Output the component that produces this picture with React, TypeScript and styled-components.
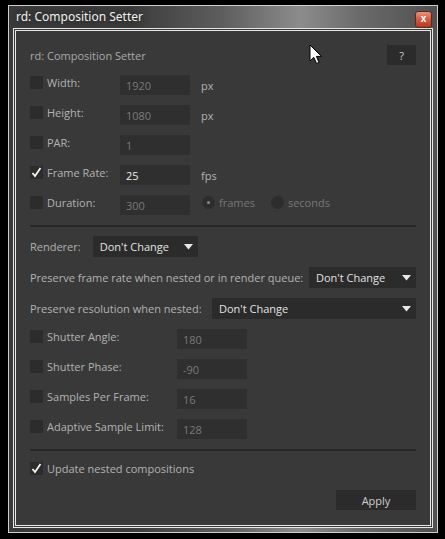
import React from "react";
import styled, { createGlobalStyle } from "styled-components";

const GlobalStyle = createGlobalStyle`
  html, body {
    margin: 0;
    padding: 0;
    background: #000;
  }
  #root {
    width: 445px;
    height: 539px;
    overflow: hidden;
  }
`;

const font = `"Open Sans", "Noto Sans", "Liberation Sans", sans-serif`;

const Window = styled.div`
  margin: 5px 0 0 8px;
  width: 430px;
  height: 528px;
  box-sizing: border-box;
  border: 1px solid #cfcfcf;
  background: linear-gradient(
    90deg,
    #3a3a3a 0%,
    #3b3b3b 28%,
    #5e5e5e 50%,
    #8c8c8c 68%,
    #6a6a6a 82%,
    #505050 100%
  );
  display: flex;
  flex-direction: column;
  padding: 0 4px 4px 4px;
  position: relative;
`;

const TitleBar = styled.div`
  height: 22px;
  display: flex;
  align-items: center;
  justify-content: space-between;
  padding: 0 1px 0 3px;
`;

const TitleText = styled.span`
  font-family: "Noto Sans", "Liberation Sans", sans-serif;
  font-size: 12px;
  color: #f0f0f0;
  margin-top: -1px;
  text-shadow: 0 0 6px rgba(0, 0, 0, 0.6);
`;

const CloseButton = styled.div`
  width: 15px;
  height: 15px;
  margin-top: 4px;
  border-radius: 3px;
  border: 1px solid #5a2a22;
  background: linear-gradient(180deg, #e9917c 0%, #cf5a41 50%, #b33a24 100%);
  display: flex;
  align-items: center;
  justify-content: center;
  font-family: "Liberation Sans", sans-serif;
  font-weight: bold;
  font-size: 10px;
  line-height: 1;
  color: #fff;
`;

const Frame = styled.div`
  flex: 1;
  border: 3px double #e8e8e8;
  background: #393939;
  display: flex;
  flex-direction: column;
  padding: 14px 14px 0 14px;
  font-family: ${font};
  font-size: 11px;
  color: #b3b3b3;
`;

const Header = styled.div`
  height: 20px;
  display: flex;
  align-items: center;
  justify-content: space-between;
  margin-bottom: 10px;
`;

const HeaderText = styled.span`
  color: #a9a9a9;
  font-size: 11px;
`;

const SmallButton = styled.div<{ $w: number }>`
  width: ${(p) => p.$w}px;
  height: 20px;
  background: #2b2b2b;
  color: #cfcfcf;
  display: flex;
  align-items: center;
  justify-content: center;
  font-size: 11px;
`;

const Rows = styled.div`
  display: flex;
  flex-direction: column;
  gap: 10px;
`;

const Row = styled.div<{ $h?: number }>`
  height: ${(p) => p.$h ?? 20}px;
  display: flex;
  align-items: center;
`;

const CheckLabel = styled.div<{ $w: number }>`
  width: ${(p) => p.$w}px;
  align-self: flex-start;
  height: 14px;
  display: flex;
  align-items: center;
  gap: 4px;
`;

const Box = styled.div`
  width: 13px;
  height: 13px;
  background: #2c2c2c;
  display: flex;
  align-items: center;
  justify-content: center;
  flex-shrink: 0;
`;

const Label = styled.span`
  color: #b3b3b3;
  white-space: nowrap;
`;

const Input = styled.div<{ $on?: boolean }>`
  width: 70px;
  height: 20px;
  box-sizing: border-box;
  background: #2f2f2f;
  padding-left: 6px;
  display: flex;
  align-items: center;
  color: ${(p) => (p.$on ? "#f0f0f0" : "#7a7a7a")};
`;

const Unit = styled.span`
  margin-left: 11px;
  color: #b3b3b3;
`;

const RadioGroup = styled.div`
  margin-left: 12px;
  align-self: flex-start;
  height: 14px;
  display: flex;
  align-items: center;
  gap: 4px;
`;

const Radio = styled.div<{ $on?: boolean }>`
  width: 13px;
  height: 13px;
  border-radius: 50%;
  background: #2d2d2d;
  display: flex;
  align-items: center;
  justify-content: center;
  &::after {
    content: "";
    display: ${(p) => (p.$on ? "block" : "none")};
    width: 3px;
    height: 3px;
    border-radius: 50%;
    background: #8a8a8a;
  }
`;

const RadioLabel = styled.span`
  color: #777;
  margin-right: 12px;
`;

const Separator = styled.div<{ $t: number; $b: number }>`
  height: 2px;
  background: #262626;
  margin: ${(p) => p.$t}px 0 ${(p) => p.$b}px 0;
`;

const Select = styled.div<{ $w: number }>`
  width: ${(p) => p.$w}px;
  height: 21px;
  box-sizing: border-box;
  background: #2b2b2b;
  display: flex;
  align-items: center;
  justify-content: space-between;
  padding: 0 5px 0 7px;
  color: #e2e2e2;
  margin-left: auto;
`;

const SelectLeft = styled(Select)`
  margin-left: 12px;
`;

const Footer = styled.div`
  display: flex;
  justify-content: flex-end;
  margin-top: 15px;
`;

const Cursor = styled.svg`
  position: absolute;
  left: 300px;
  top: 38px;
`;

const Check = () => (
  <svg width="11" height="11" viewBox="0 0 11 11">
    <path d="M1.5 6 L4 9 L9.5 1" fill="none" stroke="#f4f4f4" strokeWidth="1.8" />
  </svg>
);

const Arrow = () => (
  <svg width="9" height="6" viewBox="0 0 9 6">
    <path d="M0 0 H9 L4.5 5.5 Z" fill="#e8e8e8" />
  </svg>
);

type FieldProps = {
  label: string;
  value: string;
  checked?: boolean;
  labelWidth: number;
  unit?: string;
  children?: React.ReactNode;
};

function Field({ label, value, checked, labelWidth, unit, children }: FieldProps) {
  return (
    <Row>
      <CheckLabel $w={labelWidth}>
        <Box>{checked && <Check />}</Box>
        <Label>{label}</Label>
      </CheckLabel>
      <Input $on={checked}>{value}</Input>
      {unit && <Unit>{unit}</Unit>}
      {children}
    </Row>
  );
}

export default function App() {
  return (
    <>
      <GlobalStyle />
      <Window>
        <TitleBar>
          <TitleText>rd: Composition Setter</TitleText>
          <CloseButton>x</CloseButton>
        </TitleBar>
        <Frame>
          <Header>
            <HeaderText>rd: Composition Setter</HeaderText>
            <SmallButton $w={29}>?</SmallButton>
          </Header>
          <Rows>
            <Field label="Width:" value="1920" labelWidth={90} unit="px" />
            <Field label="Height:" value="1080" labelWidth={90} unit="px" />
            <Field label="PAR:" value="1" labelWidth={90} />
            <Field label="Frame Rate:" value="25" labelWidth={90} unit="fps" checked />
            <Field label="Duration:" value="300" labelWidth={90}>
              <RadioGroup>
                <Radio $on />
                <RadioLabel>frames</RadioLabel>
                <Radio />
                <RadioLabel>seconds</RadioLabel>
              </RadioGroup>
            </Field>
          </Rows>
          <Separator $t={10} $b={9} />
          <Rows>
            <Row $h={21}>
              <Label>Renderer:</Label>
              <SelectLeft $w={105}>
                Don't Change
                <Arrow />
              </SelectLeft>
            </Row>
            <Row $h={21}>
              <Label>Preserve frame rate when nested or in render queue:</Label>
              <Select $w={107}>
                Don't Change
                <Arrow />
              </Select>
            </Row>
            <Row $h={21}>
              <Label>Preserve resolution when nested:</Label>
              <Select $w={204}>
                Don't Change
                <Arrow />
              </Select>
            </Row>
            <Field label="Shutter Angle:" value="180" labelWidth={147} />
            <Field label="Shutter Phase:" value="-90" labelWidth={147} />
            <Field label="Samples Per Frame:" value="16" labelWidth={147} />
            <Field label="Adaptive Sample Limit:" value="128" labelWidth={147} />
          </Rows>
          <Separator $t={10} $b={10} />
          <Row $h={14}>
            <CheckLabel $w={300}>
              <Box>
                <Check />
              </Box>
              <Label>Update nested compositions</Label>
            </CheckLabel>
          </Row>
          <Footer>
            <SmallButton $w={80}>Apply</SmallButton>
          </Footer>
        </Frame>
        <Cursor width="14" height="22" viewBox="0 0 14 22">
          <path
            d="M1 1 V17 L4.8 13.3 L7.5 19.5 L10 18.4 L7.4 12.4 L12.5 12.4 Z"
            fill="#fff"
            stroke="#000"
            strokeWidth="1"
          />
        </Cursor>
      </Window>
    </>
  );
}
